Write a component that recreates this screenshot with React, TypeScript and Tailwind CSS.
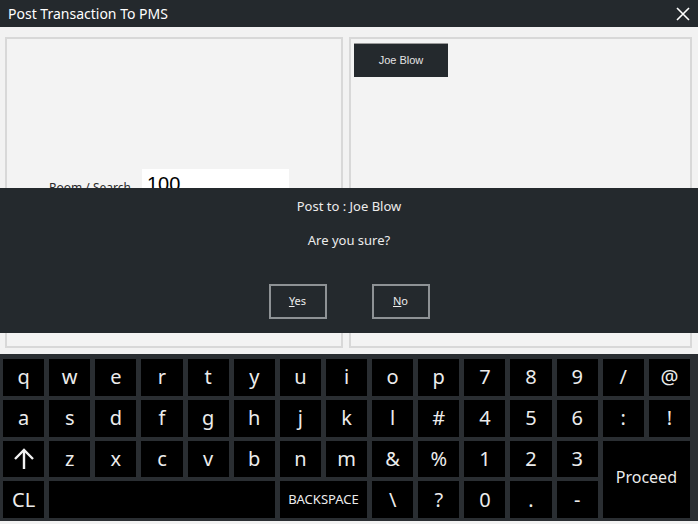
import React from 'react';

type Key = { label: string; span?: string; small?: boolean; arrow?: boolean };

const row1 = 'q w e r t y u i o p 7 8 9 / @'.split(' ');
const row2 = 'a s d f g h j k l # 4 5 6 : !'.split(' ');
const row3 = ['↑', 'z', 'x', 'c', 'v', 'b', 'n', 'm', '&', '%', '1', '2', '3'];
const row4 = ['\\', '?', '0', '.', '-'];

const ArrowUpIcon = () => (
  <svg width="22" height="24" viewBox="0 0 22 24" fill="none" stroke="#f2f2f2" strokeWidth="2.4">
    <path d="M11 22V3" />
    <path d="M2 12l9-9 9 9" />
  </svg>
);

const KeyButton: React.FC<{ k: Key }> = ({ k }) => (
  <div
    className={`bg-black flex items-center justify-center text-[#ececec] ${k.span ?? ''} ${
      k.small ? 'text-[13px]' : 'text-[20px]'
    }`}
  >
    {k.arrow ? <ArrowUpIcon /> : k.label}
  </div>
);

const App: React.FC = () => {
  return (
    <div className="w-[698px] h-[524px] bg-[#f2f2f2] flex flex-col relative overflow-hidden font-['Noto_Sans',sans-serif]">
      {/* title bar */}
      <div className="h-[27px] bg-[#24292d] flex items-center justify-between pl-[8px] pr-[8px] shrink-0">
        <span className="text-[14px] text-white leading-none">Post Transaction To PMS</span>
        <svg width="14" height="14" viewBox="0 0 14 14" stroke="#ffffff" strokeWidth="1.6">
          <path d="M1 1l12 12M13 1L1 13" />
        </svg>
      </div>

      {/* panels */}
      <div className="flex gap-[6px] pt-[10px] pl-[5px] pr-[6px] h-[321px] shrink-0">
        <div className="w-[338px] h-[311px] border-2 border-[#d8d8d8] bg-[#f3f3f3] relative">
          <div className="flex items-center pt-[130px] pl-[42px] gap-[11px]">
            <span className="text-[12px] text-[#2b2b2b]">Room / Search</span>
            <div className="w-[147px] h-[38px] bg-white flex items-start pt-[3px] pl-[5px] text-[20px] leading-[24px] text-black font-['Liberation_Sans',sans-serif]">
              100
            </div>
          </div>
        </div>
        <div className="flex-1 h-[311px] border-2 border-[#d8d8d8] bg-[#f3f3f3] pt-[4px] pl-[3px]">
          <div className="w-[94px] h-[34px] bg-[#24292d] border-t border-[#9a9a9a] flex items-center justify-center text-[11px] text-[#e4e4e4] font-['Liberation_Sans',sans-serif]">
            Joe Blow
          </div>
        </div>
      </div>

      {/* keyboard */}
      <div className="mt-[6px] h-[167px] bg-[#2a2e32] pl-[3px] pr-[8px] pt-[5px] pb-[3px] grid grid-cols-15 grid-rows-4 gap-x-[5px] gap-y-[4px] shrink-0">
        {row1.map(l => (
          <KeyButton key={'a' + l} k={{ label: l }} />
        ))}
        {row2.map(l => (
          <KeyButton key={'b' + l} k={{ label: l }} />
        ))}
        {row3.map(l => (
          <KeyButton key={'c' + l} k={{ label: l, arrow: l === '↑' }} />
        ))}
        <div className="bg-black col-span-2 row-span-2 flex items-center justify-center pb-[4px] text-[16px] text-[#ececec]">
          Proceed
        </div>
        <KeyButton k={{ label: 'CL' }} />
        <div className="bg-black col-span-5" />
        <KeyButton k={{ label: 'BACKSPACE', span: 'col-span-2', small: true }} />
        {row4.map(l => (
          <KeyButton key={'d' + l} k={{ label: l }} />
        ))}
      </div>

      {/* confirm dialog */}
      <div className="absolute left-0 right-0 top-[188px] h-[145px] bg-[#24292d] flex flex-col items-center text-[#ececec]">
        <div className="mt-[9px] text-[13px]">Post to : Joe Blow</div>
        <div className="mt-[14px] text-[13px]">Are you sure?</div>
        <div className="mt-[34px] flex gap-[45px]">
          <div className="w-[58px] h-[35px] border-2 border-[#8e9295] flex items-center justify-center text-[11px]">
            <span>
              <span className="underline">Y</span>es
            </span>
          </div>
          <div className="w-[58px] h-[35px] border-2 border-[#8e9295] flex items-center justify-center text-[11px]">
            <span>
              <span className="underline">N</span>o
            </span>
          </div>
        </div>
      </div>
    </div>
  );
};

export default App;
